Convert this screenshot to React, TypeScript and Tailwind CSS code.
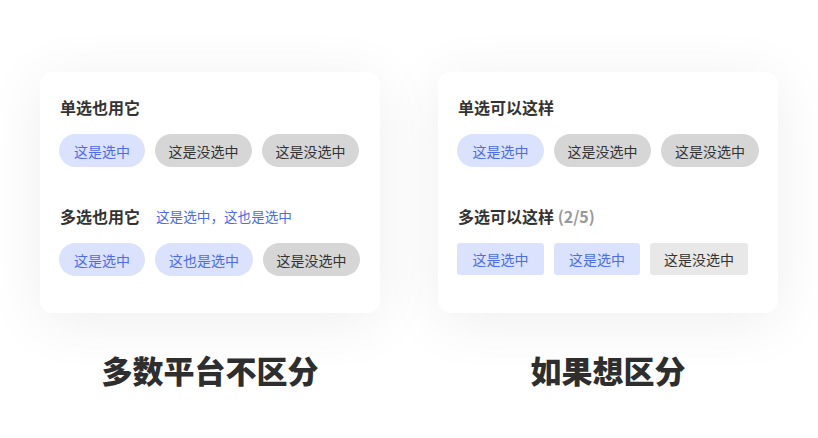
import React from "react";

type ChipProps = { label: string; on?: boolean; shape: "pill" | "rect"; w: string; soft?: boolean };

function Chip({ label, on, shape, w, soft }: ChipProps) {
  const base = "flex items-center justify-center text-[14px] leading-none shrink-0";
  const form = shape === "pill" ? "h-[33px] rounded-full" : "h-[32px] rounded-[3px]";
  const tone = on
    ? "bg-[#dbe2fe] text-[#4b6cf0]"
    : soft
    ? "bg-[#e8e8e8] text-[#333333]"
    : "bg-[#d6d6d6] text-[#333333]";
  return <div className={`${base} ${form} ${tone} ${w}`}>{label}</div>;
}

function Title({ children }: { children: React.ReactNode }) {
  return <div className="text-[16px] leading-[22px] font-semibold text-[#333333]">{children}</div>;
}

export default function App() {
  return (
    <div
      className="w-[818px] h-[438px] bg-white overflow-hidden"
      style={{ fontFamily: '"Noto Sans CJK SC", "Noto Sans", sans-serif' }}
    >
      <div className="flex gap-[58px] pl-[40px] pt-[72px]">
        {/* left card */}
        <div className="w-[340px] h-[241px] rounded-[12px] bg-white shadow-[0_8px_60px_rgba(0,0,0,0.07)] pl-[19px] pt-[24px] flex flex-col">
          <div className="pl-[1px]">
            <Title>单选也用它</Title>
          </div>
          <div className="flex gap-[10px] mt-[16px]">
            <Chip label="这是选中" on shape="pill" w="w-[86px]" />
            <Chip label="这是没选中" shape="pill" w="w-[97px]" />
            <Chip label="这是没选中" shape="pill" w="w-[97px]" />
          </div>
          <div className="flex items-center gap-[16px] mt-[38px] pl-[1px]">
            <Title>多选也用它</Title>
            <span className="text-[13.6px] leading-[22px] text-[#4b6cf0]">这是选中，这也是选中</span>
          </div>
          <div className="flex gap-[10px] mt-[16px]">
            <Chip label="这是选中" on shape="pill" w="w-[86px]" />
            <Chip label="这也是选中" on shape="pill" w="w-[98px]" />
            <Chip label="这是没选中" shape="pill" w="w-[97px]" />
          </div>
        </div>

        {/* right card */}
        <div className="w-[340px] h-[241px] rounded-[12px] bg-white shadow-[0_8px_60px_rgba(0,0,0,0.07)] pl-[19px] pt-[24px] flex flex-col">
          <div className="pl-[1px]">
            <Title>单选可以这样</Title>
          </div>
          <div className="flex gap-[10px] mt-[16px]">
            <Chip label="这是选中" on shape="pill" w="w-[87px]" />
            <Chip label="这是没选中" shape="pill" w="w-[97px]" />
            <Chip label="这是没选中" shape="pill" w="w-[98px]" />
          </div>
          <div className="flex items-center mt-[38px] pl-[1px]">
            <Title>
              多选可以这样 <span className="text-[#999999]">(2/5)</span>
            </Title>
          </div>
          <div className="flex gap-[10px] mt-[16px]">
            <Chip label="这是选中" on shape="rect" w="w-[87px]" />
            <Chip label="这是选中" on shape="rect" w="w-[86px]" />
            <Chip label="这是没选中" shape="rect" soft w="w-[98px]" />
          </div>
        </div>
      </div>

      <div className="flex gap-[58px] pl-[40px] mt-[37px]">
        <div className="w-[340px] text-center text-[31px] leading-[40px] font-black text-[#2e2e2e]">多数平台不区分</div>
        <div className="w-[340px] text-center text-[31px] leading-[40px] font-black text-[#2e2e2e]">如果想区分</div>
      </div>
    </div>
  );
}
